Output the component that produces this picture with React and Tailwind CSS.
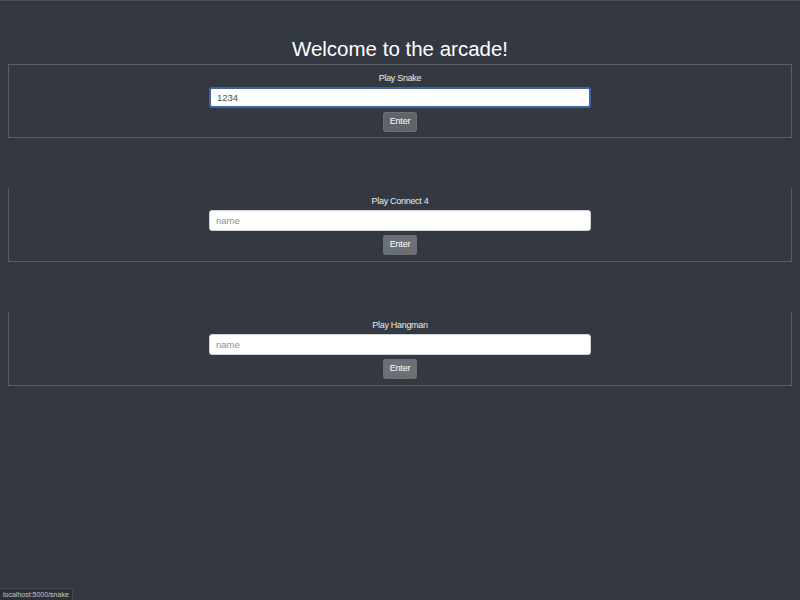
import React from 'react';

const games = [
  { title: 'Play Snake', value: '1234', focused: true },
  { title: 'Play Connect 4', value: '', focused: false },
  { title: 'Play Hangman', value: '', focused: false },
];

const GameBox = ({ title, value, focused, first }) => (
  <div
    className={`h-[74px] mx-2 border-x border-b border-[#585d64] flex flex-col items-center pt-[7px] ${
      first ? 'border-t' : ''
    }`}
  >
    <label className="text-[9px] leading-[12px] tracking-[-0.3px] text-[#e9ecef]">{title}</label>
    <input
      readOnly
      defaultValue={value}
      placeholder="name"
      className={`mt-[3px] w-[382px] h-[21px] rounded-[3px] bg-white px-[6px] text-[9.5px] text-[#495057] placeholder:text-[#8b9096] outline-none ${
        focused ? 'border-2 border-[#3c64a8] px-[5px]' : 'border border-[#ced4da]'
      }`}
    />
    <button
      className={`mt-1 h-[20px] w-[34px] rounded-[3px] text-[9px] tracking-[-0.2px] text-white ${
        focused ? 'bg-[#606368] border border-dotted border-[#7a7d82]' : 'bg-[#6c7076]'
      }`}
    >
      Enter
    </button>
  </div>
);

export default function App() {
  return (
    <div
      className="relative h-[600px] w-[800px] bg-[#343941] border-t border-[#4a4f57] overflow-hidden"
      style={{ fontFamily: '"Liberation Sans", Arial, sans-serif' }}
    >
      <h1 className="pt-[35px] mb-[2px] text-center text-[20.5px] leading-[26px] text-white">
        Welcome to the arcade!
      </h1>
      <div className="flex flex-col gap-[50px]">
        {games.map((g, i) => (
          <GameBox key={g.title} {...g} first={i === 0} />
        ))}
      </div>
      <div className="absolute left-0 bottom-0 h-[12px] px-[3px] bg-[#2c3036] border-t border-r border-[#464a51] rounded-tr-[2px] text-[7px] leading-[11px] text-[#c5c8cc]">
        localhost:5000/snake
      </div>
    </div>
  );
}
